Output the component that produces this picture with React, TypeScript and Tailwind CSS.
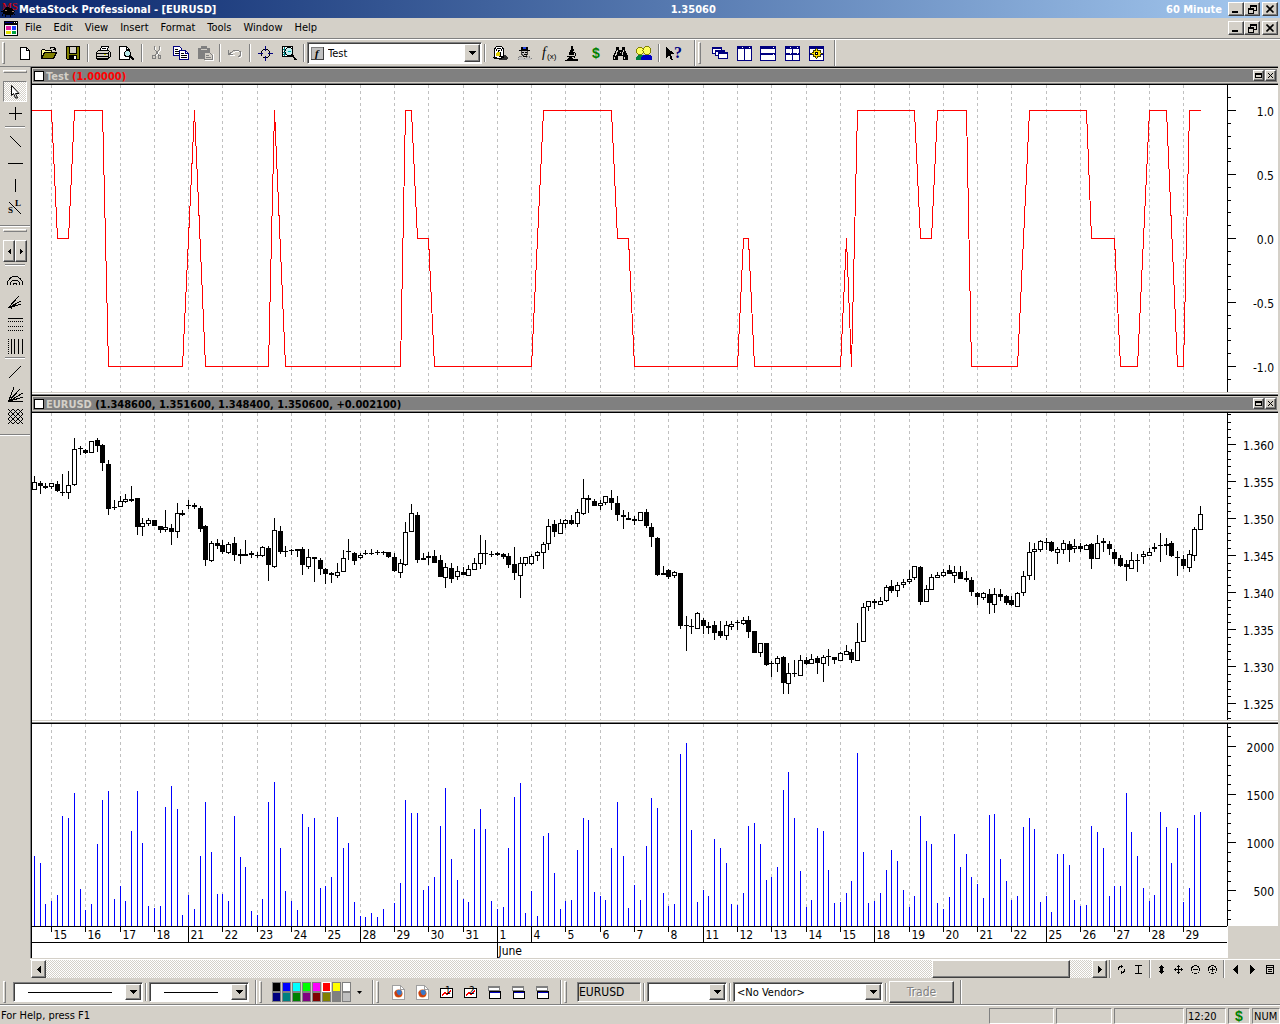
import type { ReactNode } from "react";

const RAISED =
  "border border-t-white border-l-white border-r-[#404040] border-b-[#404040] shadow-[inset_-1px_-1px_0_#808080]";
const SUNKEN =
  "border border-t-[#808080] border-l-[#808080] border-r-white border-b-white";
const CHECKER =
  "bg-[repeating-conic-gradient(#d4d0c8_0_25%,#ffffff_0_50%)] bg-[length:2px_2px]";

// high, body top, body bottom, low (thirds of a pixel), 1 = hollow body
const CANDLES = `243 261 285 285 1,258 264 273 297 0,264 273 279 282 0,264 264 276 282 1,258 267 288 291 0,237 291 294 303 0,228 270 294 312 1,129 162 270 273 1,153 159 162 180 0,162 165 174 177 0
138 138 174 174 1,129 135 153 171 0,147 150 204 228 0,195 207 342 360 0,315 336 339 345 0,303 318 336 336 1,297 312 321 324 1,273 312 318 321 0,309 309 396 420 0,369 384 396 423 1
369 375 387 393 1,375 375 393 393 0,393 393 405 414 0,345 396 405 411 1,387 399 411 450 0,324 354 411 429 1,345 354 360 363 0,315 330 333 342 0,324 330 336 342 0,333 339 402 411 0
390 393 495 513 0,438 444 498 501 1,432 444 453 462 0,435 450 471 477 0,441 447 474 477 1,426 444 480 498 0,462 477 483 507 0,435 477 483 483 0,468 474 480 489 0,471 480 483 489 0
453 456 483 486 1,453 459 510 558 0,369 405 516 519 1,393 408 471 477 0,453 468 471 486 0,462 465 468 480 0,462 462 468 486 0,456 462 510 540 0,462 486 516 522 1,486 486 492 561 0
489 495 522 540 0,519 522 537 567 0,531 534 540 564 0,504 531 543 549 1,465 489 531 531 1,432 468 471 495 0,471 474 498 510 0,474 480 489 492 1,465 474 477 480 0,462 474 477 480 0
465 471 474 480 0,468 471 474 480 0,471 471 486 489 0,474 486 528 531 0,492 504 534 549 1,381 411 510 513 1,327 354 411 411 1,351 360 495 504 0,474 489 495 495 0,471 483 489 510 0
465 483 504 504 0,480 495 546 546 0,504 516 549 579 1,504 519 552 564 0,513 528 546 555 1,516 531 540 540 0,510 522 543 543 1,489 504 525 525 1,420 474 507 522 1,435 474 477 510 0
468 477 480 486 0,471 474 480 483 0,474 477 486 492 0,474 483 510 519 0,456 507 534 555 0,486 504 543 609 1,486 486 507 513 1,477 483 507 510 1,468 471 483 498 1,441 447 474 522 1
372 393 447 465 1,375 387 411 426 0,372 384 417 417 1,372 375 387 399 1,360 375 387 390 0,342 351 387 396 1,252 309 357 360 1,300 309 315 354 0,312 318 333 333 0,315 324 333 345 1
303 303 324 330 1,285 309 324 345 0,303 324 360 378 0,345 360 366 402 0,351 369 375 375 0,363 372 378 390 0,351 351 378 378 1,342 351 393 399 0,384 396 426 456 0,426 429 540 543 0
513 534 540 540 0,522 525 546 552 0,528 531 543 549 1,534 534 693 702 0,663 690 693 768 0,672 693 696 717 0,651 654 702 702 1,669 675 693 717 0,681 693 699 717 0,678 690 714 735 0
678 708 723 729 0,678 690 723 735 1,678 687 696 705 1,675 681 684 705 0,666 675 687 690 1,663 675 711 729 0,708 708 774 774 0,744 744 774 786 1,744 744 810 813 0,798 804 807 846 0
783 789 807 831 1,783 786 864 897 0,804 834 867 897 1,795 834 837 846 0,780 795 843 843 1,786 795 807 810 0,777 792 807 807 1,783 789 804 837 0,780 786 807 861 1,762 783 786 813 0
786 786 795 807 0,771 774 798 798 1,750 768 780 780 1,762 771 795 804 0,684 741 798 798 1,624 636 741 741 1,618 618 636 648 1,612 618 624 642 0,606 618 630 630 1,570 576 618 621 1
555 573 588 594 0,561 570 588 606 1,552 561 570 579 1,525 552 561 567 1,513 513 549 555 1,513 516 621 630 0,570 582 621 621 1,537 546 585 585 1,531 540 549 549 1,522 531 543 546 1
510 525 537 537 0,513 531 543 564 1,513 531 552 552 0,528 549 555 561 0,546 555 591 603 0,591 594 606 630 0,591 594 609 615 1,582 597 624 657 0,579 597 630 654 1,582 597 606 618 0
600 603 624 630 0,603 615 630 633 0,591 594 636 636 1,528 543 594 603 1,441 471 543 555 1,444 462 471 555 1,435 438 465 471 1,429 441 444 465 0,438 441 468 471 0,456 462 474 507 1
435 444 465 477 1,438 447 465 501 0,432 453 462 474 1,444 453 462 471 0,447 450 465 465 1,444 447 492 522 0,420 444 492 492 1,429 438 444 471 0,438 447 462 480 0,462 471 492 507 0
480 489 513 516 0,495 507 516 558 0,471 495 522 522 1,477 495 498 531 0,468 477 486 507 1,459 471 483 483 1,444 456 462 471 0,414 450 453 501 0,429 447 453 480 0,438 444 483 486 0
468 486 489 543 0,480 492 513 522 0,465 477 519 531 1,396 402 483 498 1,333 357 405 405 1`
  .split(/[\n,]/)
  .map((c) => c.trim().split(" ").map(Number));

// tops of the volume bars, thirds of a pixel
const VOLUME = [
  408, 429, 552, 543, 525, 288, 294, 219, 507, 570, 552, 372, 240, 213, 537, 498, 543, 333, 213, 369, 558,
  564, 558, 261, 198, 267, 585, 525, 567, 408, 246, 396, 522, 522, 543, 288, 411, 441, 573, 585, 537, 246,
  186, 384, 513, 543, 570, 282, 321, 294, 504, 498, 471, 291, 384, 369, 546, 588, 591, 579, 591, 567, 618,
  549, 489, 240, 279, 279, 510, 498, 471, 318, 204, 417, 480, 537, 546, 327, 267, 327, 543, 567, 561, 384,
  231, 189, 579, 513, 588, 348, 339, 459, 567, 543, 540, 390, 294, 300, 516, 528, 540, 384, 246, 408, 564,
  495, 540, 378, 234, 264, 519, 558, 552, 102, 69, 330, 546, 510, 528, 357, 384, 429, 552, 555, 519, 318,
  309, 372, 480, 471, 441, 210, 156, 294, 453, 561, 540, 324, 333, 450, 549, 546, 519, 483, 99, 396, 549,
  543, 519, 450, 390, 423, 510, 561, 528, 288, 363, 372, 549, 567, 531, 342, 441, 402, 471, 492, 534, 285,
  282, 417, 483, 540, 528, 321, 294, 327, 546, 528, 576, 402, 402, 435, 540, 558, 555, 318, 336, 384, 528,
  498, 498, 219, 336, 408, 504, 543, 525, 276, 321, 429, 324, 546, 504, 285, 276,
];

// turning points of the Test indicator: [bar, value]
const SIGNAL = [
  [0, 1], [3, 1], [4, 0], [6, 0], [7, 1], [12, 1], [13, -1], [26, -1], [28, 1], [30, -1], [41, -1], [42, 1],
  [44, -1], [64, -1], [65, 1], [66, 1], [67, 0], [69, 0], [70, -1], [87, -1], [89, 1], [101, 1], [102, 0],
  [104, 0], [105, -1], [123, -1], [124, 0], [125, 0], [126, -1], [141, -1], [142, 0], [143, -1], [144, 1],
  [154, 1], [155, 0], [157, 0], [158, 1], [163, 1], [164, -1], [172, -1], [174, 1], [184, 1], [185, 0],
  [189, 0], [190, -1], [193, -1], [195, 1], [198, 1], [200, -1], [201, -1], [202, 1], [204, 1],
];

const DAYS = [
  15, 16, 17, 18, 21, 22, 23, 24, 25, 28, 29, 30, 31, 1, 4, 5, 6, 7, 8, 11, 12, 13, 14, 15, 18, 19, 20, 21,
  22, 25, 26, 27, 28, 29,
];
const WEEK_STARTS = [4, 9, 13, 14, 19, 24, 29];

const PLOT_W = 1195;
const barX = (i: number) => Math.round(1.8 + 5.717 * i);
const dayX = (k: number) => barX(3 + 6 * k);

const Grid = ({ height }: { height: number }) => (
  <>
    {DAYS.map((_, k) => (
      <path key={k} d={`M${dayX(k) + 0.5} 0V${height}`} stroke="#c0c0c0" strokeDasharray="3 3" />
    ))}
  </>
);

const Plot = ({ height, label, children }: { height: number; label: string; children: ReactNode }) => (
  <svg
    viewBox={`0 0 ${PLOT_W} ${height}`}
    height={height}
    preserveAspectRatio="none"
    className="block min-w-0 flex-1 bg-white"
    shapeRendering="crispEdges"
    fill="none"
    role="img"
    aria-label={label}
  >
    <Grid height={height} />
    {children}
  </svg>
);

interface AxisProps {
  height: number;
  first: number;
  step: number;
  every: number;
  offset: number;
  labels: string[];
}

// `first` is the y of the top label, `step` the distance between labels
const Axis = ({ height, first, step, every, offset, labels }: AxisProps) => {
  const minor = step / every;
  const ticks: number[] = [];
  for (let y = first - offset * minor; y < height; y += minor) ticks.push(y);
  return (
    <svg width="51" height={height} className="block shrink-0 bg-white" fill="none">
      <g shapeRendering="crispEdges" stroke="#000">
        <path d={`M.5 0V${height}`} />
        {ticks.map((y) => (
          <path key={y} d={`M1 ${Math.round(y) + 0.5}h3`} />
        ))}
        {labels.map((l, i) => (
          <path key={l} d={`M1 ${Math.round(first + i * step) + 0.5}h8`} />
        ))}
      </g>
      {labels.map((l, i) => (
        <text key={l} x="47" y={Math.round(first + i * step) + 6} textAnchor="end" fill="#000" className="text-xs">
          {l}
        </text>
      ))}
    </svg>
  );
};

const DateAxis = () => (
  <div className="flex">
    <svg height="32" className="block min-w-0 flex-1 border-t border-black bg-white">
      <path d="M0 15.5H4000" stroke="#000" shapeRendering="crispEdges" />
      {DAYS.map((d, k) => {
        const x = `${((dayX(k) + 0.5) / PLOT_W) * 100}%`;
        const end = k === 13 ? 31 : WEEK_STARTS.includes(k) ? 15 : 5;
        return (
          <g key={k}>
            <line x1={x} x2={x} y1="0" y2={end} stroke="#000" shapeRendering="crispEdges" />
            <text x={x} y="12" dx="2" className="text-xs">
              {d}
            </text>
            {k === 13 && (
              <text x={x} y="28" dx="1" className="text-xs">
                June
              </text>
            )}
          </g>
        );
      })}
    </svg>
    <div className="w-[51px] shrink-0 border-l border-white bg-[#d4d0c8]" />
  </div>
);

const Icon = ({ w = 16, h = 16, children }: { w?: number; h?: number; children: ReactNode }) => (
  <svg
    width={w}
    height={h}
    viewBox={`0 0 ${w} ${h}`}
    fill="none"
    stroke="#000"
    shapeRendering="crispEdges"
    className="block shrink-0 overflow-visible"
    aria-hidden
  >
    {children}
  </svg>
);

const Tool = ({ label, children }: { label: string; children: ReactNode }) => (
  <button aria-label={label} className="flex h-6 w-6 shrink-0 items-center justify-center">
    {children}
  </button>
);

const Sep = () => <div className="mx-[2px] h-[18px] w-[2px] shrink-0 border-l border-[#808080] bg-white" />;
const Grip = () => (
  <div className="h-[22px] w-[3px] shrink-0 border border-t-white border-r-[#808080] border-b-[#808080] border-l-white" />
);
const Edge = () => <div className="w-[2px] shrink-0 self-stretch border-l border-[#808080] bg-white" />;
const RowGrip = () => (
  <div className="h-[3px] w-6 shrink-0 border border-t-white border-r-[#808080] border-b-[#808080] border-l-white" />
);
const RowSep = () => <div className="h-[2px] w-5 shrink-0 border-t border-[#808080] bg-white" />;

const Down = () => (
  <svg width="7" height="4" viewBox="0 0 7 4" shapeRendering="crispEdges" aria-hidden>
    <path d="M0 0h7v1H0zM1 1h5v1H1zM2 2h3v1H2zM3 3h1v1H3z" />
  </svg>
);

interface ComboProps {
  label: string;
  value?: string;
  className: string;
  line?: boolean;
  icon?: ReactNode;
}

const Combo = ({ label, value = "", className, line, icon }: ComboProps) => (
  <div className={`relative flex shrink-0 items-center bg-white shadow-[inset_1px_1px_0_#404040] ${SUNKEN} ${className}`}>
    {icon && <span className="pointer-events-none absolute left-[3px]">{icon}</span>}
    {line && <span className="pointer-events-none absolute left-3.5 right-[30px] h-px bg-black" />}
    <select aria-label={label} className={`h-full w-full appearance-none pt-px outline-none ${icon ? "pl-5" : "pl-[3px]"}`}>
      <option>{value}</option>
    </select>
    <span
      className={`pointer-events-none absolute inset-y-[1px] right-[1px] flex w-4 items-center justify-center bg-[#d4d0c8] ${RAISED}`}
    >
      <Down />
    </span>
  </div>
);

const WindowButtons = () => (
  <div className="flex pr-[2px]">
    <button aria-label="Minimize" className={`flex h-3.5 w-4 items-center justify-center bg-[#d4d0c8] ${RAISED}`}>
      <Icon w={10} h={9}>
        <path d="M1 7h6" strokeWidth="2" />
      </Icon>
    </button>
    <button aria-label="Restore" className={`mr-[2px] flex h-3.5 w-4 items-center justify-center bg-[#d4d0c8] ${RAISED}`}>
      <Icon w={9} h={9}>
        <path d="M2.5 3V.5h6v5H6M2 1.500h7M.5 3.5h5v5h-5zM0 4.500h6" />
      </Icon>
    </button>
    <button aria-label="Close" className={`flex h-3.5 w-4 items-center justify-center bg-[#d4d0c8] ${RAISED}`}>
      <svg width="9" height="8" viewBox="0 0 9 8" stroke="#000" strokeWidth="1.6" aria-hidden>
        <path d="M.5.5l7 7M7.5.5l-7 7" />
      </svg>
    </button>
  </div>
);

const PanelHeader = ({ name, values, red }: { name: string; values: string; red?: boolean }) => (
  <div className="border-t border-black">
    <div className="flex h-[15px] items-center border border-[#d4d0c8] bg-[#808080] px-px">
      <span className="mr-[2px] h-2.5 w-2.5 border border-black bg-white" />
      <h2 className="flex-1 pt-px text-[11px] leading-[13px] font-bold text-[#d4d0c8]">
        {name} <span className={red ? "text-[#ff0000]" : "text-black"}>{values}</span>
      </h2>
      <button aria-label="Maximize" className={`mr-[1px] flex h-[11px] w-[11px] items-center justify-center bg-[#d4d0c8] ${RAISED}`}>
        <Icon w={7} h={5}>
          <path d="M.5.5h6v4h-6zM0 1.5h7" />
        </Icon>
      </button>
      <button aria-label="Close" className={`flex h-[11px] w-[11px] items-center justify-center bg-[#d4d0c8] ${RAISED}`}>
        <Icon w={5} h={5}>
          <path d="M0 0l5 5M5 0L0 5" />
        </Icon>
      </button>
    </div>
    <div className="h-[2px] border-b border-black bg-[#808080]" />
  </div>
);

const PanelBreak = () => (
  <div className="h-[3px] border-t border-b border-t-[#d4d0c8] border-b-[#808080] bg-white" />
);

const NAVY = "#000080";

const MainToolbar = () => (
  <div className="flex h-[26px] items-center">
    <div className="w-[2px] shrink-0" />
    <Grip />
    <div className="w-2 shrink-0" />
    <Tool label="New">
      <Icon w={11} h={13}>
        <path d="M.5.5h6l3 3v9H.5z" fill="#fff" />
        <path d="M6.5.5v3h3" />
      </Icon>
    </Tool>
    <Tool label="Open">
      <Icon w={16} h={14}>
        <path d="M.5 12.5v-8l1-1h2l1 1h6v2" fill="#ffff99" />
        <path d="M.5 12.5l3-6h12l-3 6z" fill="#808000" />
        <path d="M9 2.5l1-1h3l1 1v2M12 3.5h3" />
      </Icon>
    </Tool>
    <Tool label="Save">
      <Icon w={14} h={14}>
        <path d="M.5.5h13v13h-12l-1-1z" fill="#808000" />
        <path d="M3.5 1v6h7V1" fill="#d4d0c8" />
        <path d="M3 9h8v4H3z" fill="#000" stroke="none" />
        <path d="M8 10h2v3H8z" fill="#fff" stroke="none" />
      </Icon>
    </Tool>
    <Sep />
    <Tool label="Print">
      <Icon w={16} h={14}>
        <path d="M4.5 5.5l2-5h7l-2 5z" fill="#fff" />
        <path d="M1.5 6.5l2-2h10l2 2v4l-2 2h-12z" fill="#d4d0c8" />
        <path d="M1 7.5h13M1 10.5h13M3 12.5h10M13.5 6v6M6.5 2.5h4M2 13.5h11" />
        <path d="M9 8.5h2" stroke="#cc0" />
      </Icon>
    </Tool>
    <Tool label="Print preview">
      <Icon w={16} h={14}>
        <path d="M.5.5h7l3 3v10H.5z" fill="#fff" />
        <path d="M7.5.5v3h3" />
        <circle cx="8.5" cy="7.5" r="3" fill="#b8e8e8" />
        <path d="M11 10l4 4" strokeWidth="2" />
      </Icon>
    </Tool>
    <Sep />
    <Tool label="Cut">
      <Icon w={10} h={14}>
        <g stroke="#fff" transform="translate(1 1)">
          <path d="M2.5 0v3l4 6M7.5 0v3l-4 6" />
        </g>
        <g stroke="#808080">
          <path d="M2.5 0v3l4 6M7.5 0v3l-4 6" />
          <path d="M.5 9.5h3v3h-3zM6.5 9.5h2v3h-2z" />
        </g>
      </Icon>
    </Tool>
    <Tool label="Copy">
      <Icon w={16} h={14}>
        <g stroke={NAVY}>
          <path d="M.5.5h6l2 2v7h-8z" fill="#fff" />
          <path d="M6.5 4.5h6l3 3v6h-9z" fill="#fff" />
          <path d="M12.5 4.5v3h3" />
        </g>
        <path d="M2 3.5h3M2 5.5h4M2 7.5h4M8 7.5h3M8 9.5h6M8 11.5h6" />
      </Icon>
    </Tool>
    <Tool label="Paste">
      <Icon w={17} h={15}>
        <path d="M1 2h12v11H1z" fill="#808080" stroke="none" />
        <path d="M4 0h6v3H4z" fill="#808080" stroke="none" />
        <path d="M4 3.5h6" stroke="#d4d0c8" />
        <path d="M7.5 6.5h5l3 3v4h-8z" stroke="#808080" fill="#d4d0c8" />
        <path d="M9 9.5h3M9 11.5h5" stroke="#808080" />
        <path d="M16.5 8v6.5H8" stroke="#fff" />
      </Icon>
    </Tool>
    <Sep />
    <Tool label="Undo">
      <Icon w={14} h={9}>
        <path d="M1.500 6.500h5M3 5l5-2.500h4l1.500 1v4L11 9" stroke="#fff" />
        <path d="M.5 1v4.500h4.500M1.500 5l4-3.500h5l2 1.500v3l-2 2" stroke="#808080" />
      </Icon>
    </Tool>
    <Sep />
    <Tool label="Crosshair">
      <Icon w={15} h={15}>
        <circle cx="7.5" cy="7.5" r="4.5" />
        <path d="M7.5 0v5M7.5 10v5M0 7.5h5M10 7.5h5" stroke={NAVY} />
      </Icon>
    </Tool>
    <Tool label="Zoom">
      <Icon w={16} h={15}>
        <path d="M1.5.5h10v10h-10z" fill="#fff" />
        <path d="M2 3.5h3M2 6.5h3M2 8.5h4M3.5 1v9" stroke="#008080" />
        <circle cx="8" cy="5.5" r="4" fill="#c0f0f0" />
        <path d="M6.5 5.5h3" stroke="#0aa" />
        <path d="M11 9l4 5" strokeWidth="2" />
      </Icon>
    </Tool>
    <Sep />
    <Combo
      label="Indicator"
      value="Test"
      className="h-[22px] w-[175px]"
      icon={
        <Icon w={13} h={13}>
          <path d="M.5.5h12v12H.5z" fill="#c0c0c0" stroke="#808080" />
          <path d="M12.5 0v12.5H0" stroke="#404040" />
          <text x="4" y="10" fill="#000" stroke="none" className="font-['Liberation_Serif',serif] text-[11px] font-bold italic">
            f
          </text>
        </Icon>
      }
    />
    <Sep />
    <Tool label="Expert advisor">
      <Icon w={16} h={15}>
        <path d="M10 9h4l2 3-2 2H7v-2h3z" fill="#303030" stroke="none" />
        <path d="M2.500 11V3l2-2.500h5L11.500 3v8l-2 1h-5z" fill="#fff" />
        <path d="M4.500 5V3.500l1.500-1h2l1.500 1V5M4.500 8l3-4M6.500 10.500h4" />
        <path d="M5 6h4v4H4V8z" fill="#e0d000" stroke="none" />
        <path d="M8.500 6v4M1 11.500h2M2 12.500h4" />
      </Icon>
    </Tool>
    <Tool label="Explorer">
      <Icon w={15} h={15}>
        <path d="M4 1h7v3H4z" fill="#000" stroke="none" />
        <path d="M6 1h3v2H6z" fill="#2040e0" stroke="none" />
        <path d="M2 4.5h11" />
        <path d="M4.5 5v3l2 2h3l1-2V5" fill="#c0c0c0" stroke="#404040" />
        <path d="M5 6.5h2M8 6.5h2M7 8.5h3M6 10.5h4" />
        <path d="M1 14v-2l3-2 3 3 4-3 3 2v2" stroke="#808080" strokeDasharray="1 1" fill="#c0c0c0" />
      </Icon>
    </Tool>
    <Tool label="Indicator builder">
      <Icon w={15} h={13}>
        <text x="1" y="10" fill="#000" stroke="none" className="font-['Liberation_Serif',serif] text-sm italic">
          f
        </text>
        <text x="6" y="12" fill="#000" stroke="none" className="font-['Liberation_Sans',sans-serif] text-[8px]">
          (x)
        </text>
      </Icon>
    </Tool>
    <Tool label="System tester">
      <Icon w={14} h={15}>
        <path d="M6 0h2v3h1l-1 4h1v2H4V7l2-4z" fill="#000" stroke="none" />
        <path d="M8 6l2 1v3l-1 2" />
        <path d="M2 10.500h7" />
        <path d="M4 11h3l1 2h5v2H0v-1l3-1z" fill="#000" stroke="none" />
      </Icon>
    </Tool>
    <Tool label="Trading">
      <span className="font-['Liberation_Sans',sans-serif] text-sm leading-none font-bold text-[#008000]">$</span>
    </Tool>
    <Tool label="Find">
      <Icon w={15} h={13}>
        <path d="M3 0h3v3h3V0h3v3l3 6v4h-5V9H5v4H0V9l3-6z" fill="#000" stroke="none" />
        <path d="M4.500 3L2.500 9M10.500 3l-1 5M7 5.500h1M1.500 10v2M11.500 10v2" stroke="#d4d0c8" />
      </Icon>
    </Tool>
    <Tool label="Users">
      <Icon w={16} h={15}>
        <path d="M0 14v-3l2-2h5v5z" fill="#008040" stroke="none" />
        <path d="M5 14v-3l2-2h7l2 2v3z" fill="#0000c0" stroke="none" />
        <circle cx="4" cy="5" r="3.500" fill="#ffff60" stroke="#808000" />
        <circle cx="11" cy="4.500" r="4" fill="#ffff60" stroke="#808000" />
      </Icon>
    </Tool>
    <Sep />
    <Tool label="Context help">
      <Icon w={17} h={15}>
        <path d="M0 1v11l3-3 2 5h2L5 8h4z" fill="#000" stroke="none" />
        <text x="8" y="12" fill={NAVY} stroke="none" className="font-['Liberation_Serif',serif] text-base font-bold">
          ?
        </text>
      </Icon>
    </Tool>
    <div className="w-2 shrink-0" />
    <Edge />
    <div className="w-[2px] shrink-0" />
    <Grip />
    <div className="w-[7px] shrink-0" />
    <Tool label="Cascade">
      <Icon w={16} h={12}>
        <g stroke={NAVY} fill="#fff">
          <path d="M.5.500h9v6h-9zM0 1.500h10" />
          <path d="M3.500 3.500h9v5h-9zM3 4.500h10" />
          <path d="M6.500 5.500h9v6h-9zM6 6.500h10" />
        </g>
      </Icon>
    </Tool>
    <Tool label="Tile columns">
      <Icon w={15} h={15}>
        <path d="M.5.500h14v14H.5z" fill="#fff" stroke={NAVY} />
        <path d="M0 1.500h15M0 2.500h15M7.500 0v15" stroke={NAVY} />
        <path d="M5 1.500h1M12 1.500h1" stroke="#fff" />
      </Icon>
    </Tool>
    <Tool label="Tile rows">
      <Icon w={16} h={15}>
        <path d="M.5.500h15v14H.5z" fill="#fff" stroke={NAVY} />
        <path d="M0 1.500h16M0 2.500h16M0 7.500h16M0 8.500h16" stroke={NAVY} />
        <path d="M13 1.500h1M13 8.500h1" stroke="#fff" />
      </Icon>
    </Tool>
    <Tool label="Tile">
      <Icon w={15} h={15}>
        <path d="M.5.500h14v14H.5z" fill="#fff" stroke={NAVY} />
        <path d="M0 1.500h15M0 2.500h15M0 7.500h15M0 8.500h15M7.500 0v15" stroke={NAVY} />
        <path d="M5 1.500h1M12 1.500h1M5 7.500h1M12 7.500h1" stroke="#fff" />
      </Icon>
    </Tool>
    <Tool label="Layout options">
      <Icon w={15} h={15}>
        <path d="M.5.500h14v14H.5z" fill="#fff" stroke={NAVY} />
        <path d="M0 1.500h15M0 2.500h15M0 7.500h15M0 8.500h15" stroke={NAVY} />
        <path d="M7.500 2.500l1.500 2h2v2l2 1-2 1v2H9l-1.500 2-1.500-2H4v-2l-2-1 2-1v-2h2z" fill="#ffe000" stroke="#404000" />
        <path d="M6.500 6.500h2v2h-2z" fill="#fff" />
      </Icon>
    </Tool>
    <div className="w-1.5 shrink-0" />
    <Edge />
  </div>
);

const SideTool = ({ label, children }: { label: string; children: ReactNode }) => (
  <button aria-label={label} className="flex h-[22px] w-6 shrink-0 items-center justify-center">
    {children}
  </button>
);

const SideToolbar = () => (
  <div className="flex w-[30px] shrink-0 flex-col items-center border-t border-[#808080]">
    <div className="flex flex-col items-center self-stretch border-b border-[#808080] pt-[3px] pb-[7px]">
      <RowGrip />
      <button aria-label="Pointer" className={`mt-2 flex h-[21px] w-6 items-center justify-center ${SUNKEN} ${CHECKER}`}>
        <Icon w={9} h={14}>
          <path d="M.5.500v10l2-2 2 4.500h2L4.500 8.500h3.500z" fill="#fff" shapeRendering="auto" />
        </Icon>
      </button>
      <SideTool label="Crosshair">
        <Icon w={13} h={13}>
          <path d="M6.500 0v13M0 6.500h13" />
        </Icon>
      </SideTool>
      <div className="py-[2px]">
        <RowSep />
      </div>
      <SideTool label="Trendline">
        <Icon w={11} h={11}>
          <path d="M0 0l11 11" />
        </Icon>
      </SideTool>
      <SideTool label="Horizontal line">
        <Icon w={15} h={1}>
          <path d="M0 .5h15" />
        </Icon>
      </SideTool>
      <SideTool label="Vertical line">
        <Icon w={1} h={13}>
          <path d="M.5 0v13" />
        </Icon>
      </SideTool>
      <SideTool label="Order line">
        <Icon w={14} h={14}>
          <path d="M1 2l12 12" />
          <g fill="#000" stroke="none" className="font-['Liberation_Serif',serif] text-[9px] font-bold">
            <text x="0" y="13">
              S
            </text>
            <text x="7" y="6">
              L
            </text>
          </g>
        </Icon>
      </SideTool>
    </div>
    <div className="flex flex-col items-center self-stretch border-t border-b border-t-white border-b-[#808080] pt-[2px] pb-[7px]">
      <RowGrip />
      <div className="mt-2 mb-[2px] flex h-[22px]">
        <button aria-label="Previous tools" className={`flex w-3 items-center justify-center ${RAISED}`}>
          <Icon w={3} h={5}>
            <path d="M3 0v5L0 2.500z" fill="#000" stroke="none" />
          </Icon>
        </button>
        <button aria-label="Next tools" className={`flex w-3 items-center justify-center ${RAISED}`}>
          <Icon w={3} h={5}>
            <path d="M0 0v5l3-2.500z" fill="#000" stroke="none" />
          </Icon>
        </button>
      </div>
      <RowSep />
      <div className="h-[3px]" />
      <SideTool label="Fibonacci arcs">
        <Icon w={16} h={9}>
          <path d="M.5 9V6l2-3 3-2.500h5l3 2.500 2 3v3M3.500 9V7l2-3h5l2 3v2M6.500 9V7h3v2" />
        </Icon>
      </SideTool>
      <SideTool label="Fibonacci fan">
        <Icon w={14} h={13}>
          <path d="M0 12L11 0M0 12l13-7M0 12l13-4M0 11h3v2" />
        </Icon>
      </SideTool>
      <SideTool label="Fibonacci retracement">
        <Icon w={15} h={13}>
          <path d="M0 .5h15" />
          <path d="M0 3.500h15M0 8.500h15M0 12.500h15" strokeDasharray="1 1" />
        </Icon>
      </SideTool>
      <SideTool label="Fibonacci time zones">
        <Icon w={15} h={15}>
          <path d="M.5 0v15" strokeDasharray="1 1" />
          <path d="M3.500 0v15M6.500 0v15M10.500 0v15M14.500 0v15" />
        </Icon>
      </SideTool>
      <RowSep />
      <div className="h-[2px]" />
      <SideTool label="Gann line">
        <Icon w={12} h={12}>
          <path d="M0 12L12 0" />
        </Icon>
      </SideTool>
      <SideTool label="Gann fan">
        <Icon w={15} h={15}>
          <path d="M.5 14.500L6 0M.500 14.500L12 2M.500 14.500L15 6M.500 14.500L15 10M0 14.500h15" />
        </Icon>
      </SideTool>
      <SideTool label="Gann grid">
        <Icon w={15} h={15}>
          <path d="M0 10l5 5M0 5l10 10M0 0l15 15M5 0l10 10M10 0l5 5M5 0L0 5M10 0L0 10M15 0L0 15M15 5L5 15M15 10l-5 5" />
        </Icon>
      </SideTool>
    </div>
    <div className="self-stretch border-t border-white" />
  </div>
);

const SmallTool = ({ label, children }: { label: string; children: ReactNode }) => (
  <button aria-label={label} className="flex h-[17px] w-[17px] shrink-0 items-center justify-center">
    {children}
  </button>
);

const ChartScroll = () => (
  <div className="flex h-[18px] items-center pr-[2px]">
    <div className={`flex h-full flex-1 ${CHECKER}`}>
      <button aria-label="Scroll left" className={`flex w-[15px] items-center justify-center bg-[#d4d0c8] ${RAISED}`}>
        <Icon w={4} h={7}>
          <path d="M4 0v7L0 3.500z" fill="#000" stroke="none" />
        </Icon>
      </button>
      <div className="flex-1" />
      <div className={`w-[138px] bg-[#d4d0c8] ${RAISED}`} />
      <div className="w-[22px]" />
      <button aria-label="Scroll right" className={`flex w-[15px] items-center justify-center bg-[#d4d0c8] ${RAISED}`}>
        <Icon w={4} h={7}>
          <path d="M0 0v7l4-3.500z" fill="#000" stroke="none" />
        </Icon>
      </button>
    </div>
    <Sep />
    <SmallTool label="Refresh">
      <Icon w={7} h={9}>
        <path d="M.5 5V2.500h1v-1h3M3.500 0v3M6.500 4v2.500h-1v1h-3M3.500 6v3" />
      </Icon>
    </SmallTool>
    <SmallTool label="Bar width">
      <Icon w={7} h={9}>
        <path d="M0 .5h7M0 8.500h7M3.500 0v9" />
      </Icon>
    </SmallTool>
    <Sep />
    <SmallTool label="Expand vertical">
      <Icon w={7} h={9}>
        <path d="M3.500 0L7 3H5v3h2L3.500 9 0 6h2V3H0z" fill="#000" stroke="none" />
      </Icon>
    </SmallTool>
    <SmallTool label="Move">
      <Icon w={9} h={9}>
        <path d="M4.500 0v9M0 4.500h9M3 1.500h3M3 7.500h3M1.500 3v3M7.500 3v3" />
      </Icon>
    </SmallTool>
    <SmallTool label="Zoom out">
      <Icon w={9} h={9}>
        <circle cx="4.500" cy="4.500" r="4" />
        <path d="M2 4.500h5" />
      </Icon>
    </SmallTool>
    <SmallTool label="Zoom in">
      <Icon w={9} h={9}>
        <circle cx="4.500" cy="4.500" r="4" />
        <path d="M2 4.500h5M4.500 2v5" />
      </Icon>
    </SmallTool>
    <Sep />
    <SmallTool label="Previous security">
      <Icon w={5} h={9}>
        <path d="M5 0v9L0 4.500z" fill="#000" stroke="none" />
      </Icon>
    </SmallTool>
    <SmallTool label="Next security">
      <Icon w={5} h={9}>
        <path d="M0 0v9l5-4.500z" fill="#000" stroke="none" />
      </Icon>
    </SmallTool>
    <SmallTool label="Security list">
      <Icon w={8} h={9}>
        <path d="M.5.500h7v8h-7zM0 2.500h8M2 4.500h4M2 6.500h4" />
      </Icon>
    </SmallTool>
  </div>
);

const SWATCHES = [
  { name: "Black", cls: "bg-black" },
  { name: "Blue", cls: "bg-[#0000ff]" },
  { name: "Cyan", cls: "bg-[#00ffff]" },
  { name: "Lime", cls: "bg-[#00ff00]" },
  { name: "Magenta", cls: "bg-[#ff00ff]" },
  { name: "Red", cls: "bg-[#ff0000]", active: true },
  { name: "Yellow", cls: "bg-[#ffff00]" },
  { name: "White", cls: "bg-white" },
  { name: "Navy", cls: "bg-[#000080]" },
  { name: "Teal", cls: "bg-[#008080]" },
  { name: "Green", cls: "bg-[#008000]" },
  { name: "Purple", cls: "bg-[#800080]" },
  { name: "Maroon", cls: "bg-[#800000]" },
  { name: "Olive", cls: "bg-[#808000]" },
  { name: "Gray", cls: "bg-[#808080]" },
  { name: "Silver", cls: "bg-[#c0c0c0]" },
];

const TemplateIcon = () => (
  <Icon w={13} h={15}>
    <path d="M.5.500h8l4 4v10H.5z" fill="#fff" stroke="#a0a0a0" />
    <path d="M8.500.500v4h4" stroke="#a0a0a0" />
    <g shapeRendering="auto" stroke="none">
      <circle cx="6.500" cy="8.500" r="4" fill="#e06818" />
      <circle cx="7" cy="7.500" r="2.800" fill="#3a78c8" />
      <path d="M2.500 7c0 6 7 7 8 1-1 3-4 3-5 1L4 6z" fill="#c83c10" />
    </g>
  </Icon>
);

const ChartIcon = ({ n }: { n: number }) => (
  <Icon w={13} h={12}>
    <path d="M.5 2.500h12v9H.500z" fill="#fff" />
    <path d="M2 9.500l3-3 2 2 4-4" stroke="#f00" />
    <text x="5" y="8" fill="#000" stroke="none" className="text-[10px]">
      {n}
    </text>
  </Icon>
);

const LayoutIcon = () => (
  <Icon w={13} h={13}>
    <path d="M.5.500h11v4H.500z" fill="#fff" stroke="#808080" />
    <path d="M0 1h12" stroke="#808080" strokeWidth="2" />
    <path d="M1.500 5.500h11v7h-11z" fill="#fff" />
    <path d="M2 6.500h10" stroke="#0000c0" />
  </Icon>
);

const BottomToolbar = () => (
  <div className="flex h-[26px] items-center pt-[2px]">
    <div className="w-[3px] shrink-0" />
    <Grip />
    <div className="w-[7px] shrink-0" />
    <Combo label="Line style" line className="h-5 w-[130px]" />
    <Sep />
    <Combo label="Line weight" line className="h-5 w-[100px]" />
    <div className="w-1.5 shrink-0" />
    <Edge />
    <div className="w-[2px] shrink-0" />
    <Grip />
    <div className="w-2.5 shrink-0" />
    <div className="grid shrink-0 grid-cols-8 gap-x-px">
      {SWATCHES.map((s) => (
        <button
          key={s.name}
          aria-label={s.name}
          className={`h-[10px] w-[9px] border bg-clip-padding ${s.active ? "border-white" : "border-[#808080]"} ${s.cls}`}
        />
      ))}
    </div>
    <button aria-label="More colors" className="ml-[2px] flex h-5 w-3 shrink-0 items-center justify-center">
      <svg width="5" height="3" viewBox="0 0 5 3" aria-hidden>
        <path d="M0 0h5L2.500 3z" />
      </svg>
    </button>
    <div className="w-[7px] shrink-0" />
    <Edge />
    <div className="w-[2px] shrink-0" />
    <Grip />
    <div className="w-[7px] shrink-0" />
    <Tool label="Template A">
      <TemplateIcon />
    </Tool>
    <Tool label="Template B">
      <TemplateIcon />
    </Tool>
    <Tool label="Chart 1">
      <ChartIcon n={1} />
    </Tool>
    <Tool label="Chart 2">
      <ChartIcon n={2} />
    </Tool>
    <Tool label="Layout A">
      <LayoutIcon />
    </Tool>
    <Tool label="Layout B">
      <LayoutIcon />
    </Tool>
    <Tool label="Layout C">
      <LayoutIcon />
    </Tool>
    <div className="w-1.5 shrink-0" />
    <Edge />
    <div className="w-[2px] shrink-0" />
    <Grip />
    <div className="w-2.5 shrink-0" />
    <input
      aria-label="Symbol"
      readOnly
      defaultValue="EURUSD"
      className={`h-5 w-16 shrink-0 px-px text-xs shadow-[inset_1px_1px_0_#404040] outline-none ${SUNKEN}`}
    />
    <Sep />
    <Combo label="Order type" className="h-5 w-20" />
    <Sep />
    <Combo label="Vendor" value="<No Vendor>" className="h-5 w-[150px]" />
    <Sep />
    <button
      disabled
      className={`h-[22px] w-[65px] shrink-0 text-xs text-[#808080] [text-shadow:1px_1px_0_#fff] ${RAISED}`}
    >
      Trade
    </button>
    <div className="w-1.5 shrink-0" />
    <Edge />
  </div>
);

const MENUS = ["File", "Edit", "View", "Insert", "Format", "Tools", "Window", "Help"];

export default function App() {
  return (
    <div className="flex min-h-screen w-full flex-col bg-[#d4d0c8] font-['DejaVu_Sans_Condensed','DejaVu_Sans',sans-serif] text-[11px] leading-4 text-black">
      <header className="flex h-[18px] items-center bg-linear-to-r from-[#0a246a] to-[#a6caf0] font-bold text-white">
        <div className="flex w-[52.4%] items-center gap-[2px] pt-px">
          <Icon w={17} h={16}>
            <text x="2" y="8" fill="#e00000" stroke="none" className="font-['Liberation_Serif',serif] text-[11px] font-normal">
              MS
            </text>
            <path d="M3 8l3-3 5 1 4 3-2 4H6l-3-1z" fill="#000" stroke="none" />
            <path d="M2 14l2-4M5 15l1-3M11 15l-1-3M15 13l-3-3M1 9h3" />
            <path d="M5 8.500h2M12 9.500h2" stroke="#a08070" />
          </Icon>
          <h1>MetaStock Professional - [EURUSD]</h1>
        </div>
        <span className="pt-[2px]">1.35060</span>
        <span className="mr-1.5 flex-1 pt-[2px] text-right">60 Minute</span>
        <WindowButtons />
      </header>

      <div className="flex h-[21px] items-center border-b border-[#808080]">
        <div className="pr-px pl-1">
          <Icon w={14} h={15}>
            <path d="M0 0h14v15H0z" fill="#000" stroke="none" />
            <path d="M1 1.500h8" stroke={NAVY} />
            <path d="M10 1.500h1M12 1.500h1" stroke="#fff" />
            <path d="M1 4h12v10H1z" fill="#fff" stroke="none" />
            <path d="M2 5h5v4H2z" fill="#e020a0" stroke="none" />
            <path d="M8 5h4v4H8z" fill="#2040ff" stroke="none" />
            <path d="M2 10h5v3H2z" fill="#e0e000" stroke="none" />
            <path d="M8 10h4v3H8z" fill="#00a040" stroke="none" />
          </Icon>
        </div>
        <nav className="flex flex-1">
          {MENUS.map((m) => (
            <button key={m} className="px-1.5">
              {m}
            </button>
          ))}
        </nav>
        <WindowButtons />
      </div>

      <div className="border-t border-white">
        <MainToolbar />
      </div>

      <main className="flex">
        <SideToolbar />
        <div className="min-w-0 flex-1">
          <div className="mr-[2px] border-t border-l border-[#808080]">
            <div className="border-l border-black">
              <PanelHeader name="Test" values="(1.00000)" red />
              <div className="flex">
                <Plot height={307} label="Test indicator">
                  <polyline
                    stroke="#ff0000"
                    points={"0,25.5 " + SIGNAL.map(([i, v]) => `${barX(i) + 0.5},${153.5 - v * 128}`).join(" ")}
                  />
                </Plot>
                <Axis height={307} first={25} step={64} every={5} offset={1} labels={["1.0", "0.5", "0.0", "-0.5", "-1.0"]} />
              </div>
              <PanelBreak />
              <PanelHeader name="EURUSD" values="(1.348600, 1.351600, 1.348400, 1.350600, +0.002100)" />
              <div className="flex">
                <Plot height={307} label="EURUSD price">
                  {CANDLES.map(([high, top, bottom, low, hollow], i) => {
                    const x = barX(i);
                    const y = top / 3 - 18;
                    const h = (bottom - top) / 3;
                    return (
                      <g key={i}>
                        <path d={`M${x + 0.5} ${high / 3 - 18}V${low / 3 - 18}`} stroke="#000" />
                        {hollow ? (
                          <rect x={x - 1.5} y={y + 0.5} width="4" height={h - 1} fill="#fff" stroke="#000" />
                        ) : (
                          <rect x={x - 2} y={y} width="5" height={h} fill="#000" />
                        )}
                      </g>
                    );
                  })}
                </Plot>
                <Axis
                  height={307}
                  first={31}
                  step={37.05}
                  every={5}
                  offset={4}
                  labels={["1.360", "1.355", "1.350", "1.345", "1.340", "1.335", "1.330", "1.325"]}
                />
              </div>
              <PanelBreak />
              <div className="flex border-t border-black">
                <Plot height={202} label="Volume">
                  {VOLUME.map((v, i) => (
                    <path key={i} d={`M${barX(i) + 0.5} 202V${v / 3 - 4}`} stroke="#0000ff" />
                  ))}
                </Plot>
                <Axis height={202} first={22} step={48.1} every={5} offset={2} labels={["2000", "1500", "1000", "500"]} />
              </div>
              <DateAxis />
            </div>
          </div>
          <div className="h-[2px] border-b border-white" />
          <div className="pl-px">
            <ChartScroll />
          </div>
        </div>
      </main>

      <BottomToolbar />

      <footer className="flex h-5 items-end gap-[2px] border-t border-[#808080] pt-[3px] shadow-[inset_0_1px_0_#fff]">
        <span className="flex-1 pl-px">For Help, press F1</span>
        <span className={`h-4 w-[65px] ${SUNKEN}`} />
        <span className={`h-4 w-14 ${SUNKEN}`} />
        <span className={`h-4 w-[70px] ${SUNKEN}`} />
        <span className={`h-4 w-10 pl-px ${SUNKEN}`}>12:20</span>
        <span
          className={`flex h-4 w-[22px] items-center justify-center font-['Liberation_Sans',sans-serif] text-sm font-bold text-[#008000] ${SUNKEN}`}
        >
          $
        </span>
        <span className={`h-4 w-7 pl-px ${SUNKEN}`}>NUM</span>
      </footer>
    </div>
  );
}
